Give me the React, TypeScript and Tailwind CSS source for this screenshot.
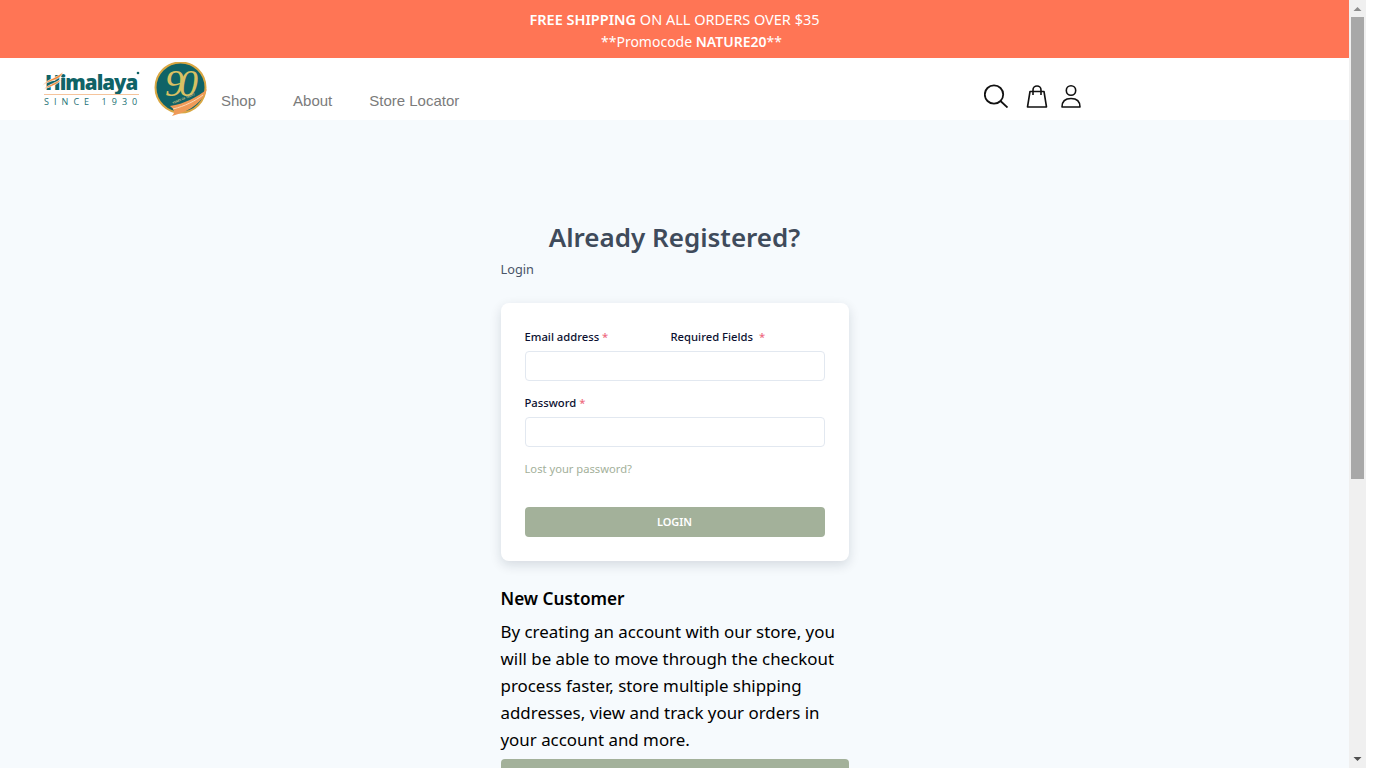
function Logo() {
  return (
    <div className="flex items-start">
      <svg width="100" height="40" viewBox="0 0 100 40" className="mt-[11px]">
        <text x="4" y="21" fontFamily="'Open Sans', sans-serif" fontWeight="800" fontSize="20.5" letterSpacing="-1" fill="#0f6367">
          Himalaya
        </text>
        <path d="M1 17 C6 10 14 10 22 3 C20 10 13 11 8 13 C5 14 3 15 1 17Z" fill="#f08a3c" stroke="#fff" strokeWidth="0.6" />
        <path d="M3 20 C8 15 15 14 20 10 C18 15 12 17 3 20Z" fill="#f08a3c" stroke="#fff" strokeWidth="0.6" />
        <circle cx="97" cy="4" r="1.3" fill="#0f6367" />
        <rect x="3" y="25" width="95" height="1" fill="#f5c49c" />
        <text x="3" y="36" fontFamily="'Open Sans', sans-serif" fontWeight="500" fontSize="9" letterSpacing="5.05" fill="#1c7174">
          SINCE 1930
        </text>
      </svg>
      <svg width="54" height="56" viewBox="0 0 54 56" className="ml-[13px] mt-[4px]">
        <circle cx="26.5" cy="25.5" r="25" fill="#0f6367" stroke="#d9a743" strokeWidth="2" />
        <text x="11" y="34" fontFamily="'Liberation Serif', serif" fontStyle="italic" fontSize="38" letterSpacing="-5" fill="#d8c063">
          90
        </text>
        <path d="M16 44 C30 42 44 35 53 27 C50 38 38 49 18 54 C22 50 20 47 16 44Z" fill="#ef9a58" />
        <path d="M19 47 C31 44 41 39 49 33" stroke="#fbd8b5" strokeWidth="1" fill="none" />
        <text x="19" y="42" transform="rotate(-22 19 42)" fontFamily="'Open Sans', sans-serif" fontWeight="600" fontSize="3" fill="#e8d48a">
          YEARS OF TRUST
        </text>
      </svg>
    </div>
  );
}

function SearchIcon() {
  return (
    <svg width="24" height="24" viewBox="0 0 24 24" fill="none" stroke="#111" strokeWidth="1.8">
      <circle cx="10" cy="10.5" r="9.2" />
      <path d="M16.5 17 L23.5 23.5" />
    </svg>
  );
}

function BagIcon() {
  return (
    <svg width="22" height="24" viewBox="0 0 22 24" fill="none" stroke="#111" strokeWidth="1.6">
      <path d="M4 7.5h14l2.5 15.5H1.5L4 7.5Z" strokeLinejoin="round" />
      <path d="M7 11V6a4 4 0 0 1 8 0v5" />
    </svg>
  );
}

function UserIcon() {
  return (
    <svg width="22" height="24" viewBox="0 0 22 24" fill="none" stroke="#111" strokeWidth="1.6">
      <circle cx="11" cy="6.5" r="4.7" />
      <path d="M2 23c0-5.5 3.5-8.5 9-8.5s9 3 9 8.5H2Z" strokeLinejoin="round" />
    </svg>
  );
}

function Field({ label, extra }: { label: string; extra?: boolean }) {
  return (
    <div>
      <div className="flex h-[18px] items-center text-[11.25px] font-medium text-[#0b1030]">
        <span className="w-[146px]">
          {label} <span className="text-[#ee6b7f]">*</span>
        </span>
        {extra && (
          <span>
            Required Fields <span className="ml-[3px] text-[#ee6b7f]">*</span>
          </span>
        )}
      </div>
      <input className="mt-[5px] block h-[30px] w-full rounded-[4px] border border-[#e2e8f0] bg-white" />
    </div>
  );
}

export default function App() {
  return (
    <div className="flex h-[768px] w-full overflow-hidden bg-white font-['Noto_Sans',sans-serif]">
      <div className="h-full w-[1349px] overflow-hidden bg-[#f6fafd]">
        <div className="h-[58px] bg-[#ff7555] pt-[8px] text-center leading-[22px] text-white">
          <p className="text-[14.5px]">
            <span className="font-semibold">FREE SHIPPING</span> ON ALL ORDERS OVER $35
          </p>
          <p className="mt-[1px] pl-[34px] text-[14px]">
            **Promocode <span className="font-semibold">NATURE20</span>**
          </p>
        </div>

        <header className="flex h-[62px] bg-white pl-[41px]">
          <Logo />
          <nav className="ml-[13px] mt-[33px] flex w-[763px] gap-[37px] font-['Liberation_Sans',sans-serif] text-[15px] leading-[20px] text-[#7b7b7b]">
            <span>Shop</span>
            <span>About</span>
            <span>Store Locator</span>
          </nav>
          <div className="mt-[26px] flex items-start">
            <SearchIcon />
            <div className="ml-[18px]">
              <BagIcon />
            </div>
            <div className="ml-[12px]">
              <UserIcon />
            </div>
          </div>
        </header>

        <main className="mx-auto w-[348px] pt-[98px]">
          <h1 className="text-center text-[26px] leading-[38px] font-semibold text-[#3f4b5b]">Already Registered?</h1>
          <p className="mt-[3px] text-[12.75px] leading-[20px] text-[#4a5568]">Login</p>

          <div className="mt-[24px] h-[258px] rounded-[8px] bg-white px-[24px] pt-[25px] shadow-[0_4px_12px_rgba(15,30,50,0.14)]">
            <Field label="Email address" extra />
            <div className="mt-[13px]">
              <Field label="Password" />
            </div>
            <p className="mt-[13px] text-[11.2px] leading-[18px] text-[#a3b09a]">Lost your password?</p>
            <button className="mt-[29px] block h-[30px] w-full rounded-[4px] bg-[#a3b19a] text-[11px] font-semibold text-white">
              LOGIN
            </button>
          </div>

          <h2 className="mt-[25px] text-[17.2px] leading-[26px] font-semibold text-black">New Customer</h2>
          <p className="mt-[6px] text-[16.9px] leading-[27px] text-black">
            By creating an account with our store, you will be able to move through the checkout process faster, store
            multiple shipping addresses, view and track your orders in your account and more.
          </p>
          <div className="mt-[6px] h-[30px] rounded-[4px] bg-[#a3b19a]" />
        </main>
      </div>

      <div className="flex h-full w-[17px] flex-col items-center bg-[#f0f0f0]">
        <svg width="9" height="17" viewBox="0 0 9 17" className="shrink-0">
          <path d="M0.5 11 L4.5 7 L8.5 11Z" fill="#8c8c8c" />
        </svg>
        <div className="h-[462px] w-[13px] shrink-0 bg-[#a8a8a8]" />
        <div className="flex-1" />
        <svg width="9" height="17" viewBox="0 0 9 17" className="shrink-0">
          <path d="M0.5 6 L8.5 6 L4.5 10Z" fill="#505050" />
        </svg>
      </div>
    </div>
  );
}
